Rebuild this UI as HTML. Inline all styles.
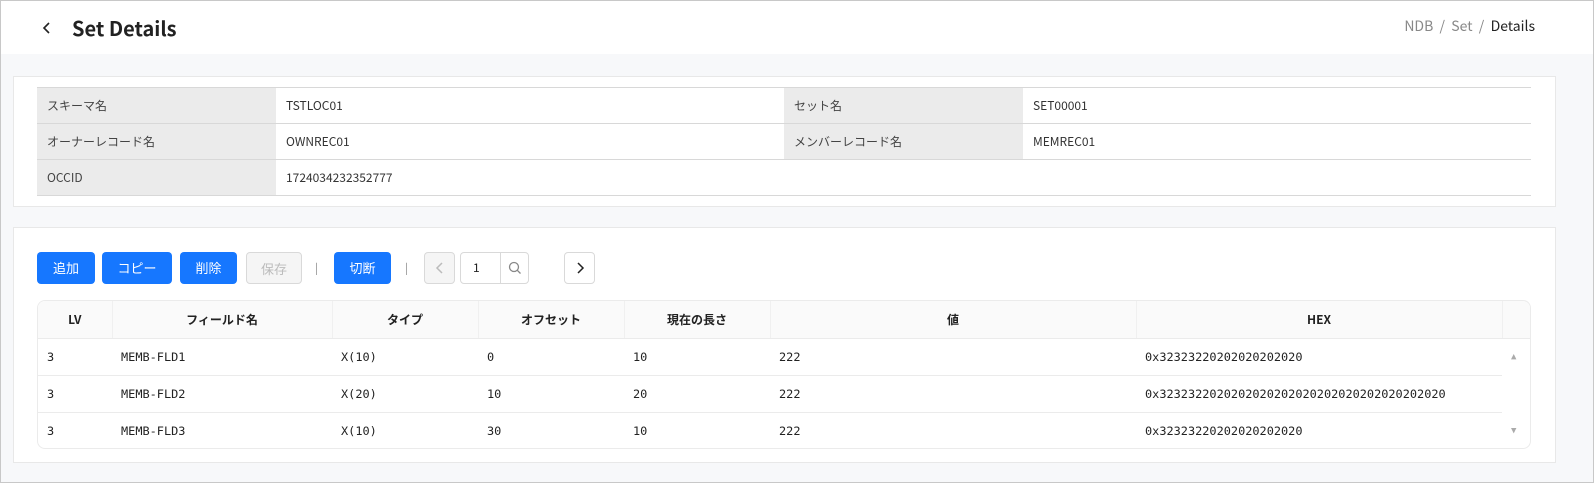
<!DOCTYPE html>
<html><head><meta charset="utf-8"><style>
*{box-sizing:border-box;margin:0;padding:0}
body{width:1594px;height:483px;background:#f7f8fa;font-family:"Noto Sans CJK JP","Liberation Sans",sans-serif;font-size:12px;color:#333;position:relative;overflow:hidden;border:1px solid #c8c8c8}
.hdr{position:absolute;left:0;top:0;width:1592px;height:53px;background:#fff}
.back{position:absolute;left:40px;top:20px}
.title{position:absolute;left:71px;top:12px;font-size:20px;font-weight:bold;color:#222}
.bc{position:absolute;right:58px;top:15px;font-size:14px;color:#888}
.bc b{color:#222;font-weight:normal}
.card{position:absolute;background:#fff;border:1px solid #e8e8e8}
table{border-collapse:collapse;position:absolute}
.info td{height:36px;border-bottom:1px solid #d8d8d8;padding-left:10px;font-size:12px}
.info tr:first-child td{border-top:1px solid #d8d8d8}
.info .l{background:#ebebeb;color:#444}
.btn{position:absolute;top:251px;height:32px;border-radius:4px;background:#1677ff;color:#fff;font-size:13px;text-align:center;line-height:32px}
.btn svg{display:block;margin:8px auto 0}
.sep{position:absolute;top:259px;color:#888;font-size:11px}
.grid{position:absolute;left:36px;top:299px;width:1494px;height:149px;border:1px solid #ebebeb;border-radius:8px;overflow:hidden}
.grid table{left:0;top:0;width:1493px}
.grid th{height:37px;background:#fafafa;font-weight:bold;font-size:12px;border-bottom:1px solid #ebebeb;border-right:1px solid #f0f0f0;color:#222}
.grid td{height:37px;border-bottom:1px solid #ebebeb;padding-left:9px;font-family:"DejaVu Sans Mono","Liberation Mono",monospace;font-size:11.9px;color:#222}
</style></head><body>
<div class="hdr"><div class="back"><svg width="12" height="14" viewBox="0 0 12 14"><path d="M8 2L3 7l5 5" fill="none" stroke="#222" stroke-width="1.6"/></svg></div><div class="title">Set Details</div>
<div class="bc">NDB &nbsp;/&nbsp; Set &nbsp;/&nbsp; <b>Details</b></div></div>
<div class="card" style="left:12px;top:75px;width:1543px;height:131px"></div>
<table class="info" style="left:36px;top:86px;width:1494px">
<tr><td class="l" style="width:239px">スキーマ名</td><td style="width:508px">TSTLOC01</td><td class="l" style="width:239px">セット名</td><td>SET00001</td></tr>
<tr><td class="l">オーナーレコード名</td><td>OWNREC01</td><td class="l">メンバーレコード名</td><td>MEMREC01</td></tr>
<tr><td class="l">OCCID</td><td colspan="3">1724034232352777</td></tr>
</table>
<div class="card" style="left:12px;top:226px;width:1543px;height:236px"></div>
<div class="btn" style="left:36px;width:58px">追加</div>
<div class="btn" style="left:101px;width:70px">コピー</div>
<div class="btn" style="left:179px;width:57px">削除</div>
<div class="btn" style="left:245px;width:56px;background:#f5f5f5;color:#bbb;border:1px solid #d9d9d9">保存</div>
<div class="sep" style="left:314px">|</div>
<div class="btn" style="left:333px;width:57px">切断</div>
<div class="sep" style="left:404px">|</div>
<div class="btn" style="left:423px;width:31px;background:#f5f5f5;border:1px solid #d9d9d9"><svg width="12" height="14" viewBox="0 0 12 14"><path d="M8 2L3 7l5 5" fill="none" stroke="#bbb" stroke-width="1.5"/></svg></div>
<div class="btn" style="left:459px;width:69px;background:#fff;border:1px solid #d9d9d9;color:#222;text-align:left;padding-left:12px;font-size:12px;line-height:30px">1<span style="position:absolute;left:39px;top:0;width:29px;height:30px;border-left:1px solid #d9d9d9"><svg width="28" height="30" viewBox="0 0 28 30" style="margin:0"><circle cx="13" cy="14" r="4.5" fill="none" stroke="#888" stroke-width="1.3"/><path d="M16.3 17.3l3.2 3.2" stroke="#888" stroke-width="1.3"/></svg></span></div>
<div class="btn" style="left:563px;width:31px;background:#fff;border:1px solid #d9d9d9"><svg width="12" height="14" viewBox="0 0 12 14"><path d="M4 2l5 5-5 5" fill="none" stroke="#222" stroke-width="1.5"/></svg></div>
<div class="grid"><table>
<tr><th style="width:74px">LV</th><th style="width:220px">フィールド名</th><th style="width:146px">タイプ</th><th style="width:146px">オフセット</th><th style="width:146px">現在の長さ</th><th style="width:366px">値</th><th style="width:366px">HEX</th><th style="border-right:none"></th></tr>
<tr><td>3</td><td>MEMB-FLD1</td><td>X(10)</td><td>0</td><td>10</td><td>222</td><td>0x32323220202020202020</td><td style="border:none;color:#aaa;font-size:9px">▲</td></tr>
<tr><td>3</td><td>MEMB-FLD2</td><td>X(20)</td><td>10</td><td>20</td><td>222</td><td>0x3232322020202020202020202020202020202020</td><td style="border:none"></td></tr>
<tr><td>3</td><td>MEMB-FLD3</td><td>X(10)</td><td>30</td><td>10</td><td>222</td><td>0x32323220202020202020</td><td style="border:none;color:#aaa;font-size:9px">▼</td></tr>
</table></div>
</body></html>
